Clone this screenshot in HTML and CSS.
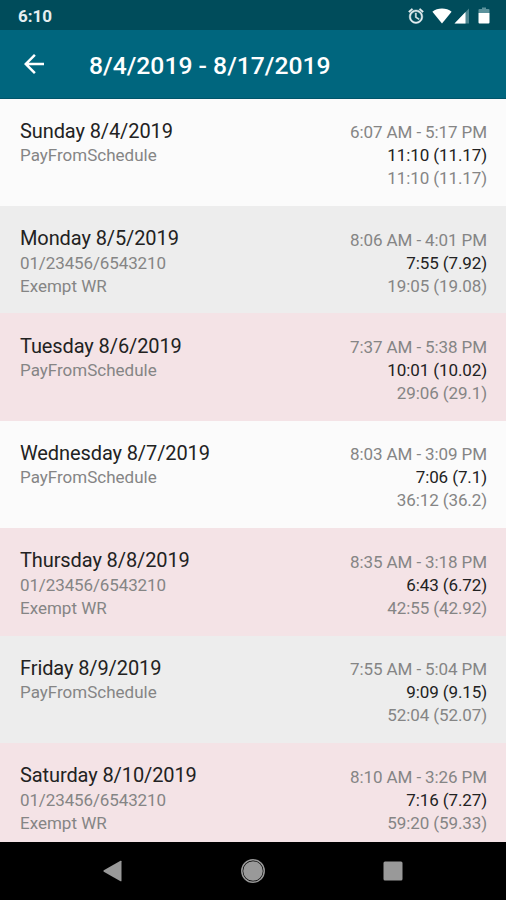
FILE: index.html
```html
<!DOCTYPE html>
<html lang="en">
<head>
    <meta charset="UTF-8">
    <meta name="viewport" content="width=device-width, initial-scale=1.0">
    <title>8/4/2019 - 8/17/2019</title>
    <link rel="stylesheet" href="styles.css">
</head>
<body>
    <div class="status-bar">
        <span class="clock">6:10</span>
        <div class="status-icons">
            <svg class="icon-alarm" width="18" height="18" viewBox="0 0 24 24" fill="#e6eff1" stroke="#e6eff1" stroke-width=".6">
                <path d="M22 5.72l-4.6-3.86-1.29 1.53 4.6 3.86L22 5.72zM7.88 3.39L6.6 1.86 2 5.71l1.29 1.53 4.59-3.85zM12.5 8H11v6l4.75 2.85.75-1.23-4-2.37V8zM12 4c-4.97 0-9 4.03-9 9s4.02 9 9 9c4.97 0 9-4.03 9-9s-4.03-9-9-9zm0 16c-3.87 0-7-3.13-7-7s3.13-7 7-7 7 3.13 7 7-3.13 7-7 7z"/>
            </svg>
            <svg class="icon-wifi" width="20" height="16" viewBox="0 0 20 16" fill="#fff">
                <path d="M10 15.6L.4 3.7C3 1.6 6.3.6 10 .6s7 1 9.6 3.1z"/>
            </svg>
            <svg class="icon-signal" width="16" height="16" viewBox="0 0 16 16">
                <path d="M15 .5V15.500H.5z" fill="#4d8590"/>
                <path d="M11.500 4V15.500H.5z" fill="#fff"/>
            </svg>
            <svg class="icon-battery" width="12" height="17" viewBox="0 0 12 17">
                <path d="M4 .5h4V2h2.500q1 0 1 1v3H.5V3q0-1 1-1H4z" fill="#5c929c"/>
                <path d="M.5 6h11v9.500q0 1-1 1h-9q-1 0-1-1z" fill="#fff"/>
            </svg>
        </div>
    </div>

    <header class="app-bar">
        <svg class="back" width="30" height="30" viewBox="0 0 24 24" fill="#fff">
            <path d="M20 11H7.830l5.590-5.590L12 4l-8 8 8 8 1.410-1.410L7.830 13H20v-2z"/>
        </svg>
        <h1>8/4/2019 - 8/17/2019</h1>
    </header>

    <main class="day-list">
        <section class="day">
            <div class="info">
                <h2>Sunday 8/4/2019</h2>
                <p>PayFromSchedule</p>
            </div>
            <div class="hours">
                <p>6:07 AM - 5:17 PM</p>
                <p class="total">11:10 (11.17)</p>
                <p>11:10 (11.17)</p>
            </div>
        </section>
        <section class="day gray">
            <div class="info">
                <h2>Monday 8/5/2019</h2>
                <p class="account">01/23456/6543210</p>
                <p>Exempt WR</p>
            </div>
            <div class="hours">
                <p>8:06 AM - 4:01 PM</p>
                <p class="total">7:55 (7.92)</p>
                <p>19:05 (19.08)</p>
            </div>
        </section>
        <section class="day pink">
            <div class="info">
                <h2>Tuesday 8/6/2019</h2>
                <p>PayFromSchedule</p>
            </div>
            <div class="hours">
                <p>7:37 AM - 5:38 PM</p>
                <p class="total">10:01 (10.02)</p>
                <p>29:06 (29.1)</p>
            </div>
        </section>
        <section class="day">
            <div class="info">
                <h2>Wednesday 8/7/2019</h2>
                <p>PayFromSchedule</p>
            </div>
            <div class="hours">
                <p>8:03 AM - 3:09 PM</p>
                <p class="total">7:06 (7.1)</p>
                <p>36:12 (36.2)</p>
            </div>
        </section>
        <section class="day pink">
            <div class="info">
                <h2>Thursday 8/8/2019</h2>
                <p class="account">01/23456/6543210</p>
                <p>Exempt WR</p>
            </div>
            <div class="hours">
                <p>8:35 AM - 3:18 PM</p>
                <p class="total">6:43 (6.72)</p>
                <p>42:55 (42.92)</p>
            </div>
        </section>
        <section class="day gray">
            <div class="info">
                <h2>Friday 8/9/2019</h2>
                <p>PayFromSchedule</p>
            </div>
            <div class="hours">
                <p>7:55 AM - 5:04 PM</p>
                <p class="total">9:09 (9.15)</p>
                <p>52:04 (52.07)</p>
            </div>
        </section>
        <section class="day pink">
            <div class="info">
                <h2>Saturday 8/10/2019</h2>
                <p class="account">01/23456/6543210</p>
                <p>Exempt WR</p>
            </div>
            <div class="hours">
                <p>8:10 AM - 3:26 PM</p>
                <p class="total">7:16 (7.27)</p>
                <p>59:20 (59.33)</p>
            </div>
        </section>
    </main>

    <nav class="nav-bar">
        <svg width="24" height="24" viewBox="0 0 24 24" fill="#999">
            <path d="M20.500 2.300v19.400q0 1-1 .5L2.800 12.700q-1-.7 0-1.400L19.500 1.800q1-.5 1 .5z"/>
        </svg>
        <svg width="24" height="24" viewBox="0 0 24 24">
            <circle cx="12" cy="12" r="11.200" fill="none" stroke="#999" stroke-width="1.500"/>
            <circle cx="12" cy="12" r="9.800" fill="#999"/>
        </svg>
        <svg width="24" height="24" viewBox="0 0 24 24">
            <rect x="2.500" y="2.500" width="19" height="19" rx="1.500" fill="#999"/>
        </svg>
    </nav>
</body>
</html>
```
FILE: styles.css
```css
body {
    display: flex;
    flex-direction: column;
    height: 900px;
    margin: 0;
    overflow: hidden;
    font-family: Roboto, "Liberation Sans", sans-serif;
    background-color: #fafafa;
}
h1, h2, p {
    margin: 0;
    white-space: nowrap;
}
svg {
    display: block;
}
.status-bar {
    display: flex;
    flex: none;
    align-items: center;
    justify-content: space-between;
    box-sizing: border-box;
    height: 30px;
    padding: 1px 16px 0 18px;
    background-color: #004c5b;
}
.clock {
    font-size: 17px;
    font-weight: 700;
    color: #e6eff1;
}
.status-icons {
    display: flex;
    align-items: center;
}
.icon-wifi {
    margin-left: 7px;
}
.icon-signal {
    margin-left: 2px;
}
.icon-battery {
    margin-left: 8px;
}
.app-bar {
    display: flex;
    flex: none;
    align-items: center;
    box-sizing: border-box;
    height: 68.700px;
    padding: 1px 19px 0;
    border-bottom: 1px solid #00556a;
    background-color: #00667e;
    color: #fff;
}
.app-bar h1 {
    margin: 2px 0 0 40px;
    font-size: 24.700px;
    font-weight: 500;
}
.day-list {
    flex: 1;
    overflow: hidden;
}
.day {
    display: flex;
    justify-content: space-between;
    box-sizing: border-box;
    height: 107.400px;
    padding: 20.100px 19px 0 20px;
    background-color: #fbfbfb;
}
.day.gray {
    background-color: #ededed;
}
.day.pink {
    background-color: #f4e3e6;
}
.day h2 {
    font-size: 20px;
    font-weight: 400;
    line-height: 25.400px;
    letter-spacing: -.1px;
    color: #222;
}
.day p {
    font-size: 17px;
    line-height: 23px;
    color: #858585;
}
.day .account {
    letter-spacing: -.12px;
}
.hours {
    padding-top: 2.500px;
}
.hours p {
    text-align: right;
    letter-spacing: -.1px;
}
.day .total {
    color: #222;
}
.nav-bar {
    display: flex;
    flex: none;
    align-items: center;
    justify-content: space-between;
    box-sizing: border-box;
    height: 58.500px;
    padding: 0 101px;
    background-color: #000;
}
```
